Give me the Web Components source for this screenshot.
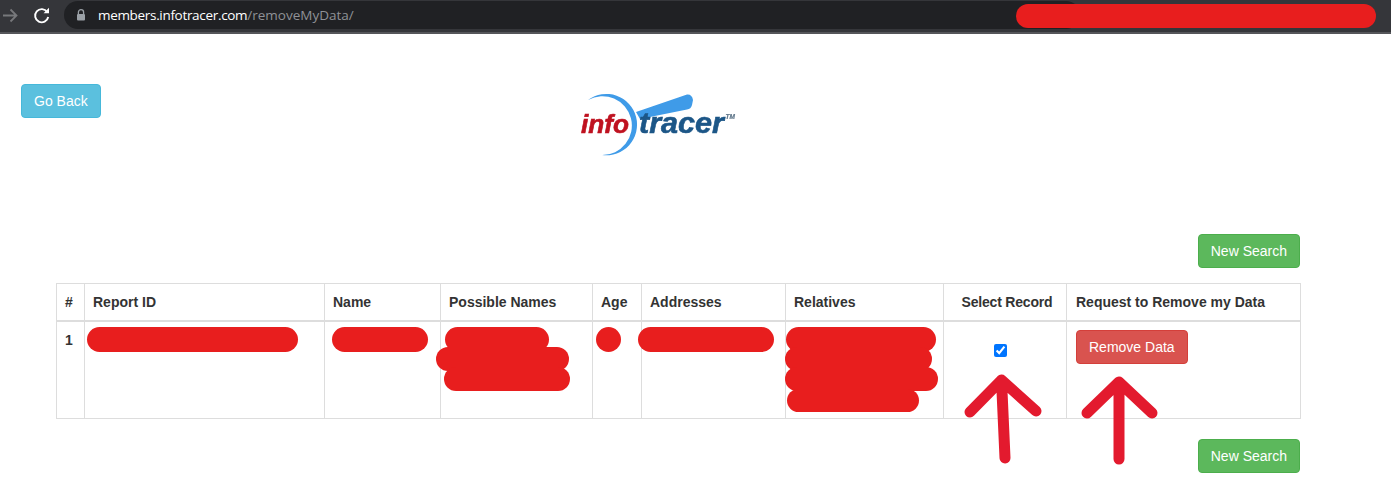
<!DOCTYPE html>
<html>
<head>
<meta charset="utf-8">
<title>Remove My Data</title>
<style>
html, body { margin: 0; padding: 0; background: #fff; }
body { font-family: "Liberation Sans", Arial, sans-serif; font-size: 14px; color: #333; width: 1391px; height: 481px; overflow: hidden; }
</style>
</head>
<body>
<browser-bar></browser-bar>
<page-header></page-header>
<action-row></action-row>
<records-table></records-table>
<action-row bottom></action-row>

<script>
class BsButton extends HTMLElement {
  constructor() {
    super();
    this.root = this.attachShadow({ mode: 'open' });
    this.root.innerHTML = `<style>
:host { display: inline-block; }
button {
  display: block;
  box-sizing: border-box;
  height: 34px;
  padding: 6px 12px;
  border: 1px solid #46b8da;
  border-radius: 4px;
  background: #5bc0de;
  color: #fff;
  font: 14px/20px "Liberation Sans", Arial, sans-serif;
  white-space: nowrap;
}
:host([kind="success"]) button { background: #5cb85c; border-color: #4cae4c; }
:host([kind="danger"]) button { background: #d9534f; border-color: #d43f3a; }
</style><button><slot></slot></button>`;
  }
}
customElements.define('bs-button', BsButton);

class RedMark extends HTMLElement {
  constructor() {
    super();
    this.root = this.attachShadow({ mode: 'open' });
    this.root.innerHTML = `<style>
:host { display: block; position: absolute; background: #e81e1e; border-radius: 13px; }
</style>`;
  }
  connectedCallback() {
    const [x, y, w, h] = this.getAttribute('box').split(',');
    this.style.left = x + 'px';
    this.style.top = y + 'px';
    this.style.width = w + 'px';
    this.style.height = h + 'px';
  }
}
customElements.define('red-mark', RedMark);

class BrowserBar extends HTMLElement {
  constructor() {
    super();
    this.root = this.attachShadow({ mode: 'open' });
    this.root.innerHTML = `<style>
:host {
  display: flex;
  align-items: flex-start;
  position: relative;
  box-sizing: border-box;
  height: 34px;
  background: #35363a;
  border-bottom: 2px solid #55565a;
}
.icons { display: flex; width: 64px; height: 28px; flex: none; margin-top: 2px; }
.icons svg { display: block; }
.pill {
  flex: none;
  display: flex;
  align-items: center;
  box-sizing: border-box;
  width: 1016px;
  height: 28px;
  margin-top: 1px;
  padding-left: 11px;
  border-radius: 14px;
  background: #202124;
  font: 13.5px "Open Sans", "Noto Sans", sans-serif;
  white-space: nowrap;
}
.pill svg { display: block; margin-right: 11px; }
.host { color: #fff; letter-spacing: -.32px; }
.path { color: #8f9196; }
</style>
<div class="icons">
  <svg width="64" height="28" viewBox="0 0 64 28">
    <path d="M3 13.5H16M10.5 7.5L16.5 13.5L10.5 19.5" fill="none" stroke="#77787b" stroke-width="1.8"/>
    <path d="M47.2 10A6.6 6.6 0 1 0 48.2 15" fill="none" stroke="#fff" stroke-width="1.9"/>
    <path d="M43.6 11.2H49V5.8Z" fill="#fff"/>
  </svg>
</div>
<div class="pill">
  <svg width="12" height="14" viewBox="0 0 12 14">
    <path d="M3.4 6V4.2a2.6 2.6 0 0 1 5.2 0V6" fill="none" stroke="#9aa0a6" stroke-width="1.3"/>
    <rect x="2" y="6" width="8" height="6.6" rx="1" fill="#9aa0a6"/>
  </svg>
  <span class="host">members.infotracer.com</span><span class="path">/removeMyData/</span>
</div>
<slot></slot>`;
    const mark = document.createElement('red-mark');
    mark.setAttribute('box', '1016,4,360,24');
    this.appendChild(mark);
  }
}
customElements.define('browser-bar', BrowserBar);

class PageHeader extends HTMLElement {
  constructor() {
    super();
    this.root = this.attachShadow({ mode: 'open' });
    this.root.innerHTML = `<style>
:host {
  display: flex;
  align-items: flex-start;
  box-sizing: border-box;
  height: 200px;
  padding: 50px 0 0 21px;
}
svg { display: block; margin-left: 469px; filter: blur(.4px); }
text { font-family: "Liberation Sans", Arial, sans-serif; font-weight: bold; font-style: italic; }
</style>
<bs-button>Go Back</bs-button>
<svg width="175" height="80" viewBox="570 84 175 80">
  <path d="M588 100A30.7 30.7 0 1 1 602 155A29.4 29.4 0 1 0 588 100Z" fill="#3f9be8"/>
  <path d="M636 112L687 94.5Q692 94 693 100L692 105Q691 109 687 109.5L640 119Z" fill="#3f9be8"/>
  <text x="581" y="133" font-size="25" fill="#bf1220" stroke="#bf1220" stroke-width=".6" textLength="48" lengthAdjust="spacingAndGlyphs">info</text>
  <text x="639" y="133" font-size="29" fill="#1c5687" stroke="#1c5687" stroke-width=".6" textLength="85" lengthAdjust="spacingAndGlyphs">tracer</text>
  <text x="725.5" y="118.5" font-size="6.5" fill="#5d7488" stroke="#5d7488" stroke-width=".2">TM</text>
</svg>`;
  }
}
customElements.define('page-header', PageHeader);

class ActionRow extends HTMLElement {
  constructor() {
    super();
    this.root = this.attachShadow({ mode: 'open' });
    this.root.innerHTML = `<style>
:host {
  display: flex;
  justify-content: flex-end;
  box-sizing: border-box;
  width: 1300px;
  margin-bottom: 15px;
}
:host([bottom]) { margin: 20px 0 0; }
</style>
<bs-button kind="success">New Search</bs-button>`;
  }
}
customElements.define('action-row', ActionRow);

class RecordsTable extends HTMLElement {
  constructor() {
    super();
    this.root = this.attachShadow({ mode: 'open' });
    this.root.innerHTML = `<style>
:host {
  display: block;
  position: relative;
  width: 1244px;
  margin-left: 56px;
}
table { border-collapse: collapse; table-layout: fixed; width: 1244px; color: #333; font: 14px/20px "Liberation Sans", Arial, sans-serif; }
th, td { border: 1px solid #ddd; padding: 8px; vertical-align: top; text-align: left; }
thead th { border-bottom-width: 2px; height: 20px; padding-top: 8px; padding-bottom: 8px; }
tbody th { height: 80px; }
td { height: 80px; }
.center { text-align: center; letter-spacing: -.2px; padding-left: 10px; padding-right: 6px; }
.action { padding-left: 9px; }
input { display: block; width: 13px; height: 13px; margin: 14px 0 0 42px; }
</style>
<table>
  <colgroup>
    <col style="width:28px"><col style="width:240px"><col style="width:116px"><col style="width:152px"><col style="width:49px"><col style="width:144px"><col style="width:158px"><col style="width:123px"><col style="width:234px">
  </colgroup>
  <thead>
    <tr><th>#</th><th>Report ID</th><th>Name</th><th>Possible Names</th><th>Age</th><th>Addresses</th><th>Relatives</th><th class="center">Select Record</th><th class="action">Request to Remove my Data</th></tr>
  </thead>
  <tbody>
    <tr><th>1</th><td></td><td></td><td></td><td></td><td></td><td></td><td><input type="checkbox" checked></td><td class="action"><bs-button kind="danger">Remove Data</bs-button></td></tr>
  </tbody>
</table>
<slot></slot>
<svg style="position:absolute;left:0;top:0;pointer-events:none" width="1245" height="198" viewBox="56 283 1245 198">
  <g fill="none" stroke="#e31a2e" stroke-width="11" stroke-linecap="round" stroke-linejoin="round">
    <path d="M970 412L1001.5 380L1036 411M1001.5 380L1005 458"/>
    <path d="M1087 413L1119 382L1152 413M1119 382V459"/>
  </g>
</svg>`;
    // redactions sit over the row, coordinates are relative to the table corner
    const marks = [
      [87, 327, 211, 25], [332, 327, 96, 25],
      [445, 327, 104, 25], [436, 347, 133, 24], [444, 367, 126, 24],
      [596, 327, 25, 25], [638, 327, 136, 25],
      [786, 327, 150, 25], [785, 347, 147, 24], [785, 367, 153, 24], [787, 389, 132, 23]
    ];
    marks.forEach(m => {
      const mark = document.createElement('red-mark');
      mark.setAttribute('box', [m[0] - 56, m[1] - 283, m[2], m[3]].join(','));
      this.appendChild(mark);
    });
  }
}
customElements.define('records-table', RecordsTable);
</script>
</body>
</html>
